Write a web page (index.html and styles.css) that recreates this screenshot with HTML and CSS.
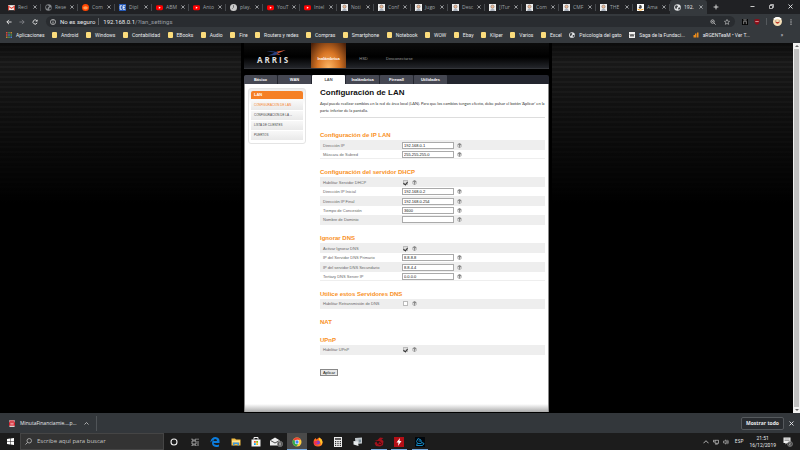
FILE: index.html
```html
<!DOCTYPE html>
<html lang="es">
<head>
<meta charset="utf-8">
<title>Configuración de LAN</title>
<link rel="stylesheet" href="styles.css">
</head>
<body>
<svg class="defs" aria-hidden="true">
  <symbol id="yt" viewBox="0 0 12 12"><rect y="2" width="12" height="8.500" rx="2.500" fill="#f00"/><path d="M4.800 4.300v4l3.400-2z" fill="#fff"/></symbol>
  <symbol id="globe" viewBox="0 0 12 12"><circle cx="6" cy="6" r="5.700" fill="#e4e6e8"/><path d="M2 3l3-1 2 2-2 2-1 3-2-2zM8 6l3 0-1 3-2 1-1-2z" fill="#3c4043"/></symbol>
  <symbol id="globedim" viewBox="0 0 12 12"><circle cx="6" cy="6" r="5.500" fill="#85898d"/><path d="M2 3l3-1 2 2-2 2-1 3-2-2zM8 6l3 0-1 3-2 1-1-2z" fill="#202124"/></symbol>
  <symbol id="gmail" viewBox="0 0 12 12"><path d="M0 2h12v8.500H0z" fill="#f1f1f1"/><path d="M0 10.500V2l6 4.500L12 2v8.500h-2V5.500L6 8.500l-4-3v5z" fill="#db4437"/></symbol>
  <symbol id="reddit" viewBox="0 0 12 12"><circle cx="6" cy="6" r="6" fill="#ff4500"/><ellipse cx="6" cy="6.500" rx="4" ry="2.800" fill="#ff9d55"/></symbol>
  <symbol id="ce" viewBox="0 0 12 12"><path d="M0 0h12v12H0z" fill="#2458b5"/><path d="M5 3H2v6h3M11 3H7v6h4M7 6h3" fill="none" stroke="#fff" stroke-width="1.500"/></symbol>
  <symbol id="play" viewBox="0 0 12 12"><circle cx="6" cy="6" r="6" fill="#c9c9c9"/><path d="M6 2v4l-2 2" stroke="#666" stroke-width="1.500" fill="none"/></symbol>
  <symbol id="person" viewBox="0 0 12 12"><path d="M0 0h12v12H0z" fill="#eee"/><circle cx="6" cy="4.500" r="2.800" fill="#efb994" stroke="#776e69"/><path d="M2 12c0-5 8-5 8 0z" fill="#a8b0bb"/></symbol>
  <symbol id="amazon" viewBox="0 0 12 12"><path d="M0 0h12v12H0z" fill="#fff"/><path d="M4 3h3v4H4V5h3" fill="none" stroke="#111" stroke-width="1.500"/><path d="M1 9q5 3 10 0" fill="none" stroke="#f90" stroke-width="1.500"/></symbol>
  <symbol id="x" viewBox="0 0 10 10"><path d="M1 1l8 8M9 1l-8 8" stroke="currentColor" stroke-width="1.800" fill="none"/></symbol>
  <symbol id="tip" viewBox="0 0 12 12"><circle cx="6" cy="6" r="5" fill="#ddd" stroke="#888"/><path d="M4 4.500q0-2 2-2t2 2q0 1-2 2V8M6 9v1.500" stroke="#222" stroke-width="1.500" fill="none"/></symbol>
</svg>

<header class="browser">
  <div class="tabs">
    <div class="tab"><svg><use href="#gmail"/></svg><span>Reci</span><button aria-label="Cerrar"><svg><use href="#x"/></svg></button></div>
    <div class="tab"><svg><use href="#globedim"/></svg><span>Rese</span><button aria-label="Cerrar"><svg><use href="#x"/></svg></button></div>
    <div class="tab"><svg><use href="#reddit"/></svg><span>Com</span><button aria-label="Cerrar"><svg><use href="#x"/></svg></button></div>
    <div class="tab"><svg><use href="#ce"/></svg><span>Dipl</span><button aria-label="Cerrar"><svg><use href="#x"/></svg></button></div>
    <div class="tab"><svg><use href="#yt"/></svg><span>ABM</span><button aria-label="Cerrar"><svg><use href="#x"/></svg></button></div>
    <div class="tab"><svg><use href="#yt"/></svg><span>Anto</span><button aria-label="Cerrar"><svg><use href="#x"/></svg></button></div>
    <div class="tab"><svg><use href="#play"/></svg><span>play.</span><button aria-label="Cerrar"><svg><use href="#x"/></svg></button></div>
    <div class="tab"><svg><use href="#yt"/></svg><span>YouT</span><button aria-label="Cerrar"><svg><use href="#x"/></svg></button></div>
    <div class="tab"><svg><use href="#yt"/></svg><span>Intel</span><button aria-label="Cerrar"><svg><use href="#x"/></svg></button></div>
    <div class="tab"><svg><use href="#person"/></svg><span>Noti</span><button aria-label="Cerrar"><svg><use href="#x"/></svg></button></div>
    <div class="tab"><svg><use href="#person"/></svg><span>Conf</span><button aria-label="Cerrar"><svg><use href="#x"/></svg></button></div>
    <div class="tab"><svg><use href="#person"/></svg><span>Jugo</span><button aria-label="Cerrar"><svg><use href="#x"/></svg></button></div>
    <div class="tab"><svg><use href="#person"/></svg><span>Desc</span><button aria-label="Cerrar"><svg><use href="#x"/></svg></button></div>
    <div class="tab"><svg><use href="#person"/></svg><span>[ITur</span><button aria-label="Cerrar"><svg><use href="#x"/></svg></button></div>
    <div class="tab"><svg><use href="#person"/></svg><span>Com</span><button aria-label="Cerrar"><svg><use href="#x"/></svg></button></div>
    <div class="tab"><svg><use href="#person"/></svg><span>CMF</span><button aria-label="Cerrar"><svg><use href="#x"/></svg></button></div>
    <div class="tab"><svg><use href="#person"/></svg><span>THE</span><button aria-label="Cerrar"><svg><use href="#x"/></svg></button></div>
    <div class="tab"><svg><use href="#amazon"/></svg><span>Ama</span><button aria-label="Cerrar"><svg><use href="#x"/></svg></button></div>
    <div class="tab current"><svg><use href="#globe"/></svg><span>192.</span><button aria-label="Cerrar"><svg><use href="#x"/></svg></button></div>
    <button class="newtab" aria-label="Nueva pestaña"><svg viewBox="0 0 10 10"><path d="M5 1v8M1 5h8" stroke="#ddd" stroke-width="1.600"/></svg></button>
    <div class="window">
      <button aria-label="Minimizar"><svg viewBox="0 0 10 10"><path d="M1 5h8" stroke="#ddd" stroke-width="1.800"/></svg></button>
      <button aria-label="Restaurar"><svg viewBox="0 0 10 10"><path d="M1 3h6v6H1zM3 3V1h6v6H7" fill="none" stroke="#ddd" stroke-width="1.500"/></svg></button>
      <button aria-label="Cerrar ventana"><svg><use href="#x"/></svg></button>
    </div>
  </div>
  <div class="toolbar">
    <button aria-label="Atrás"><svg viewBox="0 0 14 14"><path d="M13 7H2M7 2L2 7l5 5" fill="none" stroke="#f1f1f1" stroke-width="2"/></svg></button>
    <button aria-label="Adelante"><svg viewBox="0 0 14 14"><path d="M1 7h11M7 2l5 5-5 5" fill="none" stroke="#84878a" stroke-width="2"/></svg></button>
    <button aria-label="Recargar"><svg viewBox="0 0 14 14"><path d="M12 9a5 5 0 1 1-1-5.500" fill="none" stroke="#f1f1f1" stroke-width="2"/><path d="M13 1v5H8z" fill="#f1f1f1"/></svg></button>
    <div class="omnibox">
      <svg viewBox="0 0 14 14"><circle cx="7" cy="7" r="6" fill="none" stroke="#ddd" stroke-width="1.500"/><path d="M7 6v5M7 3v2" stroke="#ddd" stroke-width="1.800"/></svg>
      <span class="unsafe">No es seguro</span>
      <span class="url">192.168.0.1<i>/?lan_settings</i></span>
      <svg class="glass" viewBox="0 0 14 14"><circle cx="6" cy="6" r="4" fill="none" stroke="#ccc" stroke-width="1.800"/><path d="M9 9l4 4M4 6h4" stroke="#ccc" stroke-width="1.800"/></svg>
      <svg viewBox="0 0 14 14"><path d="M7 1l1.800 4 4.200.400-3.200 2.900 1 4.200L7 10.300l-3.800 2.200 1-4.200L1 5.400 5.200 5z" fill="none" stroke="#ccc" stroke-width="1.400"/></svg>
    </div>
    <div class="ext">
      <svg viewBox="0 0 14 14"><path d="M0 0h14v14H0z" fill="#050505"/><path d="M4 12V5h6v7M3 2h8" stroke="#bbb" stroke-width="1.600" fill="none"/></svg>
      <svg viewBox="0 0 14 14"><path d="M1 1l6-1 6 1v5q0 5-6 8-6-3-6-8z" fill="#8e0d18"/><path d="M3 6h8" stroke="#e0a5a8" stroke-width="2"/></svg>
      <i></i>
      <svg class="face" viewBox="0 0 16 16"><circle cx="8" cy="8" r="8" fill="#f4dfb8"/><path d="M2 4q6-5 12 0" fill="none" stroke="#fff" stroke-width="3"/><circle cx="5" cy="7" r="1" fill="#744"/><circle cx="11" cy="7" r="1" fill="#744"/><path d="M4 9h8q-4 6-8 0z" fill="#c03a28"/></svg>
      <svg viewBox="0 0 14 14"><g fill="#ccc"><circle cx="7" cy="2" r="1.500"/><circle cx="7" cy="7" r="1.500"/><circle cx="7" cy="12" r="1.500"/></g></svg>
    </div>
  </div>
  <nav class="bookmarks">
    <div class="links">
      <a href="#"><svg viewBox="0 0 12 12"><path d="M0 0h3v3H0zM0 4.500h3v3H0z" fill="#e34a3c"/><path d="M4.500 0h3v3h-3zM9 4.500h3v3H9zM4.500 9h3v3h-3z" fill="#4a9a56"/><path d="M9 0h3v3H9zM0 9h3v3H0z" fill="#c08a30"/><path d="M4.500 4.500h3v3h-3zM9 9h3v3H9z" fill="#4a80d0"/></svg>Aplicaciones</a>
      <a href="#"><b></b>Android</a>
      <a href="#"><b></b>Windows</a>
      <a href="#"><b></b>Contabilidad</a>
      <a href="#"><b></b>EBooks</a>
      <a href="#"><b></b>Audio</a>
      <a href="#"><b></b>Fire</a>
      <a href="#"><b></b>Routers y redes</a>
      <a href="#"><b></b>Compras</a>
      <a href="#"><b></b>Smartphone</a>
      <a href="#"><b></b>Notebook</a>
      <a href="#"><b></b>WOW</a>
      <a href="#"><b></b>Ebay</a>
      <a href="#"><b></b>Kliper</a>
      <a href="#"><b></b>Varios</a>
      <a href="#"><b></b>Excel</a>
      <a href="#"><svg><use href="#globe"/></svg>Psicología del gato</a>
      <a href="#"><svg viewBox="0 0 12 12"><path d="M0 0h12v12H0z" fill="#eee"/><path d="M2 4l2 5 2-5 2 5 2-5" fill="none" stroke="#333" stroke-width="1.500"/></svg>Saga de la Fundaci...</a>
      <a href="#"><svg viewBox="0 0 12 12"><path d="M1 11V6h3V3h3v8zM8 1h3v10H8z" fill="#e98b1d"/></svg>aRGENTeaM • Ver T...</a>
    </div>
    <button aria-label="Más marcadores">»</button>
  </nav>
</header>

<main class="viewport">
  <div class="backdrop">
    <div class="page">
      <div class="masthead">
        <div class="logo">
          <svg viewBox="0 0 48 14"><path d="M1 4q15-2 27 1L47 0 34 5 22 12 4 13q10-2 17-7Q12 4 1 4z" fill="#27407f"/><path d="M24 4L47 0 34 5l-8 3 3-3z" fill="#e2582c"/><path d="M28 8l8 4-12-2z" fill="#e2582c"/></svg>
          <span>ARRIS</span>
        </div>
        <a class="on" href="#">Inalámbrica</a>
        <a href="#">HSD</a>
        <a class="out" href="#">Desconectarse</a>
      </div>
      <nav class="sections">
        <a href="#">Básico</a><a href="#">WAN</a><a class="on" href="#">LAN</a><a href="#">Inalámbrica</a><a href="#">Firewall</a><a href="#">Utilidades</a>
      </nav>
      <div class="body">
        <aside>
          <div class="menu">
            <h3>LAN</h3>
            <a class="on" href="#">CONFIGURACION DE LAN</a>
            <a href="#">CONFIGURACION DE LA ...</a>
            <a href="#">LISTA DE CLIENTES</a>
            <a href="#">PUERTOS</a>
          </div>
        </aside>
        <form class="settings">
          <div class="intro">
            <h1>Configuración de LAN</h1>
            <p>Aquí puede realizar cambios en la red de área local (LAN). Para que los cambios tengan efecto, debe pulsar el botón 'Aplicar' en la<br>parte inferior de la pantalla.</p>
          </div>
          <section>
            <h2>Configuración de IP LAN</h2>
            <div class="row"><label for="ip">Dirección IP</label><input type="text" id="ip" value="192.168.0.1"><svg><use href="#tip"/></svg></div>
            <div class="row"><label for="mask">Máscara de Subred</label><input type="text" id="mask" value="255.255.255.0"><svg><use href="#tip"/></svg></div>
          </section>
          <section>
            <h2>Configuración del servidor DHCP</h2>
            <div class="row"><label for="dhcp">Habilitar Servidor DHCP</label><input type="checkbox" id="dhcp" checked><svg><use href="#tip"/></svg></div>
            <div class="row"><label for="first">Dirección IP Inicial</label><input type="text" id="first" value="192.168.0.2"><svg><use href="#tip"/></svg></div>
            <div class="row"><label for="last">Dirección IP Final</label><input type="text" id="last" value="192.168.0.254"><svg><use href="#tip"/></svg></div>
            <div class="row"><label for="lease">Tiempo de Concesión</label><input type="text" id="lease" value="3600"><svg><use href="#tip"/></svg></div>
            <div class="row"><label for="domain">Nombre de Dominio</label><input type="text" id="domain" value=""><svg><use href="#tip"/></svg></div>
          </section>
          <section>
            <h2>Ignorar DNS</h2>
            <div class="row"><label for="dns">Activar Ignorar DNS</label><input type="checkbox" id="dns" checked><svg><use href="#tip"/></svg></div>
            <div class="row"><label for="dns1">IP del Servidor DNS Primario</label><input type="text" id="dns1" value="8.8.8.8"><svg><use href="#tip"/></svg></div>
            <div class="row"><label for="dns2">IP del servidor DNS Secundario</label><input type="text" id="dns2" value="8.8.4.4"><svg><use href="#tip"/></svg></div>
            <div class="row"><label for="dns3">Tertiary DNS Server IP</label><input type="text" id="dns3" value="0.0.0.0"><svg><use href="#tip"/></svg></div>
          </section>
          <section>
            <h2>Utilice estos Servidores DNS</h2>
            <div class="row"><label for="relay">Habilitar Retransmisión de DNS</label><input type="checkbox" id="relay"><svg><use href="#tip"/></svg></div>
          </section>
          <section><h2>NAT</h2></section>
          <section>
            <h2>UPnP</h2>
            <div class="row"><label for="upnp">Habilitar UPnP</label><input type="checkbox" id="upnp" checked><svg><use href="#tip"/></svg></div>
          </section>
          <button class="apply" type="button">Aplicar</button>
        </form>
      </div>
    </div>
  </div>
  <div class="scrollbar"><i class="up"></i><i class="thumb"></i><i class="down"></i></div>
</main>

<div class="downloads">
  <svg viewBox="0 0 14 16"><path d="M1 0h12v16H1z" fill="#e8dede"/><path d="M0 5h14v8H0z" fill="#d5202c"/><path d="M2 1h10v3H2z" fill="#d5202c"/><path d="M3 9h8" stroke="#fff" stroke-width="2"/></svg>
  <span>MinutaFinanciamie....p...</span>
  <button class="more" aria-label="Opciones"><svg viewBox="0 0 10 10"><path d="M1 7l4-4 4 4" fill="none" stroke="#ccc" stroke-width="1.600"/></svg></button>
  <button class="showall">Mostrar todo</button>
  <button class="dismiss" aria-label="Cerrar barra"><svg><use href="#x"/></svg></button>
</div>

<footer class="taskbar">
  <button class="start" aria-label="Inicio"><svg viewBox="0 0 14 14"><path d="M0 2l6-1v5.500H0zM7 1l7-1v6.500H7zM0 7.500h6V13l-6-1zM7 7.500h7V14l-7-1z" fill="#fff"/></svg></button>
  <label class="search"><svg viewBox="0 0 14 14"><circle cx="8.500" cy="5.500" r="4.500" fill="none" stroke="#ccc" stroke-width="1.400"/><path d="M5 9l-4 4" stroke="#ccc" stroke-width="1.500"/></svg><input type="text" placeholder="Escribe aquí para buscar" aria-label="Buscar"></label>
  <div class="apps">
    <button aria-label="Cortana"><svg viewBox="0 0 20 20"><circle cx="10" cy="10" r="6" fill="none" stroke="#eee" stroke-width="2.200"/></svg></button>
    <button aria-label="Vista de tareas"><svg viewBox="0 0 20 20"><path d="M4 8h8v6H4zM4 3v3h8V3M4 18v-2h8v2M16 3v3M16 8v10" fill="none" stroke="#bbb" stroke-width="1.600"/></svg></button>
    <button aria-label="Edge"><svg viewBox="0 0 20 20"><path d="M1 9Q3 0 11 0q8 1 8 8v4H7q1 4 6 4 3 0 5-1v4q-3 1-6 1-8-1-8-8 0-4 3-6-4 1-6 5zm6-1h7q0-4-3.500-4T7 8z" fill="#0c7cdc"/></svg></button>
    <button aria-label="Explorador"><svg viewBox="0 0 20 20"><path d="M1 3h7l2 2h9v12H1z" fill="#f3bd43"/><path d="M2 7h16v4H2z" fill="#ffe394"/><path d="M4 11h12v6h-3v-3H7v3H4z" fill="#3d97dd"/></svg></button>
    <button aria-label="Tienda"><svg viewBox="0 0 20 20"><path d="M1 5h18v14H1z" fill="#f5f5f5"/><path d="M6 5V1h8v4" fill="none" stroke="#f5f5f5" stroke-width="2"/><path d="M6 8h3.500v3.500H6z" fill="#f25022"/><path d="M10.500 8H14v3.500h-3.500z" fill="#7fba00"/><path d="M6 12.500h3.500V16H6z" fill="#00a4ef"/><path d="M10.500 12.500H14V16h-3.500z" fill="#ffb900"/></svg></button>
    <button aria-label="Correo"><svg class="mail" viewBox="0 0 26 20"><path d="M0 7l10-6 10 6v10H0z" fill="#eee"/><path d="M1 7l9 5 9-5" fill="none" stroke="#222" stroke-width="1.600"/><circle cx="20" cy="14" r="5.500" fill="#555" stroke="#999"/><path d="M20 11v6" stroke="#fff" stroke-width="1.500"/></svg></button>
    <button class="on" aria-label="Chrome"><svg viewBox="0 0 20 20"><circle cx="10" cy="10" r="9" fill="#ffcd40"/><path d="M10 10L2.200 5.500A9 9 0 0 1 17.800 5.500H10z" fill="#ea4335"/><path d="M10 10L2.200 5.500A9 9 0 0 0 9 19l3-5z" fill="#34a853"/><circle cx="10" cy="10" r="4.500" fill="#fff"/><circle cx="10" cy="10" r="3.300" fill="#4285f4"/></svg></button>
    <button aria-label="Firefox"><svg viewBox="0 0 20 20"><path d="M1 10q0-5 4-8l2 3 5-4q7 3 7 10 0 8-9 8T1 10z" fill="#ff6b1e"/><path d="M12 1q7 3 7 10-1 4-4 6 2-5-1-8-3-3-2-8z" fill="#ffc52b"/><circle cx="10" cy="11" r="4" fill="#7846cf"/><path d="M2 9q3-2 6 0l2 2-4 2q1 3 5 3-6 3-9-3z" fill="#f22e55"/></svg></button>
    <button aria-label="Calculadora"><svg viewBox="0 0 20 20"><path d="M2 0h16v20H2z" fill="#eee"/><path d="M4 2.500h12v3H4zM4 8h2.500v2.500H4zm4.700 0h2.500v2.500H8.700zm4.700 0H16v2.500h-2.600zM4 12h2.500v2.500H4zm4.700 0h2.500v2.500H8.700zm4.700 0H16v2.500h-2.600zM4 16h2.500v2H4zm4.700 0h2.500v2H8.700zm4.700 0H16v2h-2.600z" fill="#333"/></svg></button>
    <button aria-label="Visor"><svg viewBox="0 0 20 20"><path d="M4 2l14-1v12l-13 1z" fill="#bfc6ca"/><path d="M1 8l9 1 1 9-10-3z" fill="#e6eaec"/><path d="M11 5l5 0v5l-4 1z" fill="#7c8e98"/></svg></button>
    <button class="run" aria-label="Dragón"><svg viewBox="0 0 20 20"><path d="M1 7l6-1 5-5 7 1-4 3 4 3-1 8-6 3-8-1-3-6 4-3 2 5 4-2-2-4z" fill="#a3121c"/><path d="M6 11q4-5 8 0t-5 4" fill="none" stroke="#310509" stroke-width="1.500"/></svg></button>
    <button class="run" aria-label="Flash"><svg viewBox="0 0 20 20"><path d="M0 0h20v20H0z" fill="#b30f16"/><path d="M12 2l-7 9h4l-1 7 7-10h-4z" fill="#fff"/></svg></button>
    <button class="run" aria-label="Editor"><svg viewBox="0 0 20 20"><path d="M0 0h20v20H0z" fill="#02070c"/><path d="M6 3l6 3v4l6 3-3 4H3l2-5-2-3zM6 13h7M7 8h4" fill="none" stroke="#1488c4" stroke-width="2"/></svg></button>
  </div>
  <div class="tray">
    <svg viewBox="0 0 14 14"><path d="M1 10l6-6 6 6" fill="none" stroke="#ddd" stroke-width="1.800"/></svg>
    <svg viewBox="0 0 14 14"><path d="M3 3h10v7H5V3M1 2v5h3M5 12h6" fill="none" stroke="#ddd" stroke-width="1.500"/></svg>
    <svg viewBox="0 0 14 14"><path d="M1 5h2l4-3v10L3 9H1zM9 4q2 3 0 6M11 2q3 5 0 10" fill="none" stroke="#ddd" stroke-width="1.300"/></svg>
    <span>ESP</span>
    <time>21:51<br>16/12/2019</time>
    <svg class="notes" viewBox="0 0 20 20"><path d="M1 1h14v11H8l-3 3v-3H1z" fill="#eee"/><path d="M3 4h10M3 7h10" stroke="#555"/><circle cx="14" cy="14" r="5" fill="#444" stroke="#aaa"/><path d="M12.500 12q3-1 2 1l-2 3h3" fill="none" stroke="#ddd"/></svg>
  </div>
</footer>
</body>
</html>
```
FILE: styles.css
```css
* { box-sizing: border-box; }
body {
  margin: 0;
  height: 100vh;
  display: flex;
  flex-direction: column;
  background: #000;
  color: #e8eaed;
  font: 5px/7px "Open Sans", sans-serif;
  overflow: hidden;
}
button { margin: 0; padding: 0; border: 0; background: none; color: inherit; font: inherit; display: flex; align-items: center; justify-content: center; }
a { color: inherit; text-decoration: none; }
svg { flex: none; display: block; }
i { font-style: normal; }
.defs { position: absolute; width: 0; height: 0; }

/* Browser chrome */
.browser { flex: none; background: #35393d; }
.tabs { display: flex; height: 14px; padding-left: 4px; background: #202124; }
.tab { flex: 0 1 37px; min-width: 0; display: flex; align-items: center; gap: 3px; padding: 0 4px; color: #9da1a6; position: relative; }
.tab svg { width: 7px; height: 7px; }
.tab span { width: 12px; white-space: nowrap; }
.tab button { color: #c4c7ca; }
.tab button svg { width: 4px; height: 4px; }
.tab::after { content: ""; position: absolute; right: 0; top: 4px; width: 1px; height: 7px; background: #45484c; }
.tab.current { background: #35393d; border-radius: 3px 3px 0 0; color: #e8eaed; }
.tab.current::after { display: none; }
.newtab { width: 18px; }
.newtab svg { width: 6px; height: 6px; }
.window { margin-left: auto; display: flex; }
.window button { width: 19px; height: 12px; }
.window svg { width: 5px; height: 5px; }
.toolbar { display: flex; align-items: center; height: 15px; padding: 0 6px; gap: 7px; }
.toolbar > button svg { width: 6px; height: 6px; }
.omnibox { flex: 1; height: 11px; display: flex; align-items: center; gap: 4px; margin-left: 1px; padding: 0 5px 0 4px; border-radius: 6px; background: #292c30; font: 6px/7px Roboto, sans-serif; }
.omnibox svg { width: 6px; height: 6px; }
.unsafe { padding-right: 3px; border-right: 1px solid #5f6367; }
.url { flex: 1; }
.url i { color: #9a9ea3; }
.omnibox .glass { margin-right: 4px; }
.ext { display: flex; align-items: center; gap: 6px; }
.ext svg { width: 6px; height: 6px; }
.ext i { width: 1px; height: 7px; background: #55595d; }
.ext .face { width: 9px; height: 9px; }
.bookmarks { display: flex; align-items: center; height: 14px; padding: 0 17px 2px 6px; white-space: nowrap; font-family: Roboto, sans-serif; }
.links { flex: 0 1 744px; display: flex; justify-content: space-between; }
.bookmarks a { display: flex; align-items: center; gap: 4px; }
.bookmarks svg { width: 6px; height: 6px; }
.bookmarks b { width: 5px; height: 6px; border-radius: 1px; background: #fbdc7c; }
.bookmarks button { margin-left: auto; }

/* Router page */
.viewport { flex: 1; min-height: 0; display: flex; }
.backdrop {
  flex: 1;
  display: flex;
  justify-content: center;
  background:
    linear-gradient(#0008, #0000 20px, #000 160px),
    repeating-linear-gradient(#181818 0 3px, #1f1f1f 3px 5px);
}
.page { width: 311px; display: flex; flex-direction: column; padding: 0 3px 1px; background: #000; font: 4px/7px "Liberation Sans", Arial, sans-serif; color: #333; }
.masthead { display: flex; height: 26px; border-bottom: 1px solid #34363a; background: linear-gradient(#0c0c0c, #000 14px, #23252a); color: #999; }
.logo { width: 67px; display: flex; flex-direction: column; align-items: center; padding: 7px 10px 0 0; }
.logo svg { width: 24px; height: 6px; margin-left: 7px; }
.logo span { font: bold 8px/8px "Open Sans", sans-serif; letter-spacing: 2px; margin-left: 2px; color: #ddd; }
.masthead a { width: 35px; display: flex; align-items: center; justify-content: center; padding-top: 6px; }
.masthead .on { font-weight: bold; color: #fff; background: radial-gradient(ellipse at 50% 100%, #ffb765, #d87524 45%, #4b210a 95%); }
.masthead .out { width: auto; padding-left: 5px; }
.sections { display: flex; height: 9px; margin-top: 6px; gap: 1px; background: #23252e; border-radius: 2px 2px 0 0; overflow: hidden; color: #fff; font-weight: bold; }
.sections a { width: 33px; display: flex; align-items: center; justify-content: center; background: #454752; border-radius: 1px 1px 0 0; }
.sections .on { background: #fff; color: #555; }
.body { flex: 1; display: flex; gap: 14px; padding: 4px 3px 0; border: 0 solid #888; border-width: 0 1px; background: linear-gradient(#fff0, #fff0 calc(100% - 8px), #aaa) #fff; }
aside { width: 58px; flex: none; }
.menu { padding: 2px; border: 1px solid #e4e4e4; border-radius: 3px; background: linear-gradient(#ececec, #fff 16px); font-size: 3px; }
.menu h3 { margin: 0 0 2px; padding-left: 3px; font: bold 4px/8px "Liberation Sans", sans-serif; background: #f58026; color: #fff; border-radius: 2px 2px 0 0; }
.menu a { display: block; height: 9px; margin-bottom: 1px; padding-left: 3px; line-height: 9px; background: linear-gradient(#f8f8f8, #e9e9e9); color: #444; white-space: nowrap; }
.menu .on { color: #f58026; }
.settings { flex: 1; min-width: 0; display: flex; flex-direction: column; gap: 8px; }
.intro { height: 30px; margin-bottom: 4px; border-bottom: 1px solid #ddd; }
h1 { margin: 0 0 2px; font: bold 8px/10px "Liberation Sans", sans-serif; color: #111; }
p { margin: 0; font-family: Lato, sans-serif; white-space: nowrap; }
h2 { margin: 0; font: bold 6px/10px "Liberation Sans", sans-serif; color: #f9901e; }
.row { display: flex; align-items: center; height: 9px; padding-left: 3px; }
.row:nth-child(even) { height: 10px; background: #eee; }
.row:last-child { border-bottom: 1px solid #eee; }
.row label { width: 79px; color: #666; }
.row svg { width: 5px; height: 5px; margin-left: 3px; }
.row input { margin: 0; }
.row input[type=text] { width: 52px; height: 7px; padding: 0 1px; border: 1px solid #aaa; background: #fff; font: inherit; line-height: 5px; color: #111; }
.row input[type=checkbox] { appearance: none; width: 5px; height: 5px; margin: 0 1px; border: 1px solid #bbb; background: #fff; display: grid; place-items: center; }
.row input:checked { background: #ddd; }
.row input:checked::before { content: ""; width: 2px; height: 3px; border: solid #333; border-width: 0 1px 1px 0; rotate: 40deg; }
.apply { width: 18px; height: 7px; margin-top: 6px; border: 1px solid #888; background: #e8e8e8; color: #111; }
.scrollbar { width: 7px; display: flex; flex-direction: column; align-items: center; padding: 2px 0; background: #f1f1f1; }
.thumb { flex: 1; width: 5px; margin: 2px 0; background: #c1c1c1; }
.up, .down { border: 2px solid transparent; border-top: 0; border-bottom-color: #666; }
.down { rotate: 180deg; }

/* Download shelf */
.downloads { flex: none; display: flex; align-items: center; height: 20px; padding: 0 6px 0 9px; background: #33373b; }
.downloads > svg { width: 6px; height: 7px; margin-right: 5px; }
.downloads button svg { width: 5px; height: 5px; }
.downloads .more { height: 15px; padding: 0 7px; border-right: 1px solid #505458; }
.downloads .showall { width: 43px; height: 13px; margin-left: auto; border: 1px solid #55595d; border-radius: 2px; background: #292c30; font-weight: bold; }
.dismiss { margin-left: 5px; }

/* Taskbar */
.taskbar { flex: none; display: flex; height: 17px; background: #1c1c1c; }
.start { width: 20px; }
.start svg { width: 7px; height: 7px; }
.search { width: 144px; display: flex; align-items: center; gap: 5px; padding-left: 4px; border: 1px solid #454545; background: #333; }
.search svg { width: 7px; height: 7px; }
.search input { flex: 1; min-width: 0; padding: 0; border: 0; background: none; font: 6px/9px "Open Sans", sans-serif; }
.search input::placeholder { color: #c4c4c4; }
.apps { flex: 0 1 266px; display: flex; }
.apps button { flex: 1; }
.apps svg { width: 10px; height: 10px; }
.apps .mail { width: 13px; }
.apps .on { background: #4a4a4a; box-shadow: inset 0 -1px #76a8dc; }
.apps .run { background: linear-gradient(#76a8dc, #76a8dc) center bottom / 16px 1px no-repeat; }
.tray { margin-left: auto; display: flex; align-items: center; gap: 4px; padding-right: 7px; }
.tray svg { width: 6px; height: 6px; }
.tray span { margin: 0 2px; }
.tray time { text-align: center; line-height: 7px; font-family: Roboto, sans-serif; }
.tray .notes { width: 10px; height: 10px; margin-left: 3px; }
```
